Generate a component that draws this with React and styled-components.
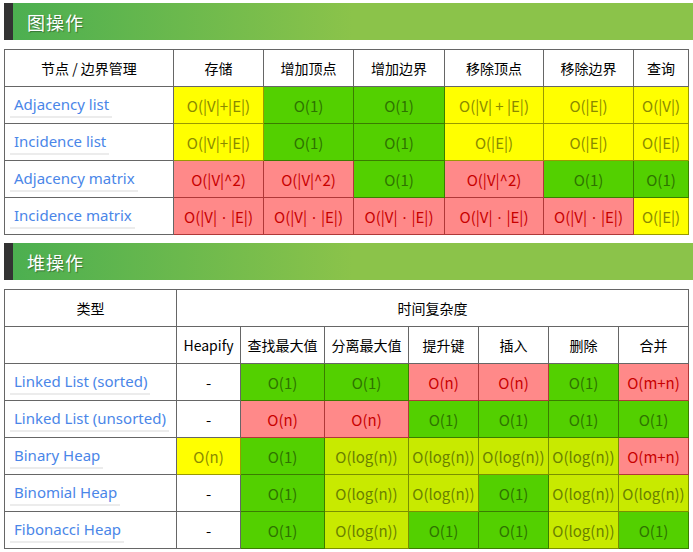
import React from 'react';
import styled, { createGlobalStyle } from 'styled-components';

const GlobalStyle = createGlobalStyle`
	html, body {
		margin: 0;
		padding: 0;
		background: #fff;
	}
	body {
		font-family: "Noto Sans", "Noto Sans CJK SC", sans-serif;
		color: #000;
	}
`;

const CELL = {
	g: { bg: '#53d000', fg: '#2e7300', line: '#3a7d00' },
	y: { bg: '#ffff00', fg: '#8a8a00', line: '#9a9a00' },
	r: { bg: '#ff8989', fg: '#c80000', line: '#b03838' },
	l: { bg: '#c8ea00', fg: '#6a8000', line: '#7a9000' },
	w: { bg: '#ffffff', fg: '#000000', line: '#666666' },
};

const Page = styled.div`
	display: flex;
	flex-direction: column;
	padding: 3px 0 0 4px;
`;

const Heading = styled.h2`
	margin: 0;
	height: 37px;
	display: flex;
	align-items: center;
	padding-left: 14px;
	border-left: 9px solid #333;
	background: linear-gradient(to right, #4caf50, #8bc34a 50%);
	color: #fff;
	font-size: 18px;
	font-weight: normal;
	letter-spacing: 1px;
	text-shadow: 1px 1px 1px rgba(0, 0, 0, 0.35);
	font-family: "Noto Sans CJK SC", sans-serif;
	& + table {
		margin-top: 9px;
	}
`;

const Table = styled.table`
	border-collapse: collapse;
	table-layout: fixed;
	width: 685px;
	margin-bottom: 8px;
	font-size: 14px;
`;

const Th = styled.th`
	height: 36px;
	padding: 0;
	border: 1px solid #666;
	font-weight: normal;
	font-size: 14px;
	text-align: center;
	font-family: "Noto Sans CJK SC", sans-serif;
`;

const Cell = styled.td`
	height: 36px;
	padding: 0;
	text-align: center;
	white-space: nowrap;
	font-size: 15px;
	font-family: "Noto Sans CJK SC", sans-serif;
	background: ${({ $k }) => CELL[$k].bg};
	color: ${({ $k }) => CELL[$k].fg};
	border: 1px solid ${({ $k }) => CELL[$k].line};
`;

const Dot = styled.span`
	font-family: "Noto Sans", sans-serif;
	margin: 0 5px;
`;

const NameCell = styled.td`
	height: 36px;
	padding: 0 0 0 5px;
	border: 1px solid #666;
	white-space: nowrap;
`;

const Link = styled.a`
	display: inline-block;
	margin-top: 3px;
	padding: 0 3px 2px 4px;
	color: #4a86e8;
	font-size: 15px;
	text-decoration: none;
	border-bottom: 2px solid #ececec;
	line-height: 19px;
`;

const graphCols = [169, 90, 90, 91, 99, 90, 55];
const heapCols = [172, 64, 84, 84, 70, 70, 70, 70];

const graphHead = ['节点 / 边界管理', '存储', '增加顶点', '增加边界', '移除顶点', '移除边界', '查询'];

const VE = 'VE';
const graphRows = [
	['Adjacency list', [['y', 'O(|V|+|E|)'], ['g', 'O(1)'], ['g', 'O(1)'], ['y', 'O(|V| + |E|)'], ['y', 'O(|E|)'], ['y', 'O(|V|)']]],
	['Incidence list', [['y', 'O(|V|+|E|)'], ['g', 'O(1)'], ['g', 'O(1)'], ['y', 'O(|E|)'], ['y', 'O(|E|)'], ['y', 'O(|E|)']]],
	['Adjacency matrix', [['r', 'O(|V|^2)'], ['r', 'O(|V|^2)'], ['g', 'O(1)'], ['r', 'O(|V|^2)'], ['g', 'O(1)'], ['g', 'O(1)']]],
	['Incidence matrix', [['r', VE], ['r', VE], ['r', VE], ['r', VE], ['r', VE], ['y', 'O(|E|)']]],
];

const heapHead = ['Heapify', '查找最大值', '分离最大值', '提升键', '插入', '删除', '合并'];

const LOG = 'O(log(n))';
const heapRows = [
	['Linked List (sorted)', [['w', '-'], ['g', 'O(1)'], ['g', 'O(1)'], ['r', 'O(n)'], ['r', 'O(n)'], ['g', 'O(1)'], ['r', 'O(m+n)']]],
	['Linked List (unsorted)', [['w', '-'], ['r', 'O(n)'], ['r', 'O(n)'], ['g', 'O(1)'], ['g', 'O(1)'], ['g', 'O(1)'], ['g', 'O(1)']]],
	['Binary Heap', [['y', 'O(n)'], ['g', 'O(1)'], ['l', LOG], ['l', LOG], ['l', LOG], ['l', LOG], ['r', 'O(m+n)']]],
	['Binomial Heap', [['w', '-'], ['g', 'O(1)'], ['l', LOG], ['l', LOG], ['g', 'O(1)'], ['l', LOG], ['l', LOG]]],
	['Fibonacci Heap', [['w', '-'], ['g', 'O(1)'], ['l', LOG], ['g', 'O(1)'], ['g', 'O(1)'], ['l', LOG], ['g', 'O(1)']]],
];

const Cols = ({ widths }) => (
	<colgroup>
		{widths.map((w, i) => <col key={i} style={{ width: w }} />)}
	</colgroup>
);

const Row = ({ name, cells }) => (
	<tr>
		<NameCell><Link href="#">{name}</Link></NameCell>
		{cells.map(([k, text], i) => (
			<Cell key={i} $k={k}>
				{text === VE ? <>O(|V|<Dot>·</Dot>|E|)</> : text}
			</Cell>
		))}
	</tr>
);

export default function App() {
	return (
		<Page>
			<GlobalStyle />
			<Heading>图操作</Heading>
			<Table>
				<Cols widths={graphCols} />
				<thead>
					<tr>{graphHead.map((h) => <Th key={h}>{h}</Th>)}</tr>
				</thead>
				<tbody>
					{graphRows.map(([name, cells]) => <Row key={name} name={name} cells={cells} />)}
				</tbody>
			</Table>
			<Heading>堆操作</Heading>
			<Table>
				<Cols widths={heapCols} />
				<thead>
					<tr>
						<Th>类型</Th>
						<Th colSpan={7}>时间复杂度</Th>
					</tr>
					<tr>
						<Th />
						{heapHead.map((h) => <Th key={h}>{h}</Th>)}
					</tr>
				</thead>
				<tbody>
					{heapRows.map(([name, cells]) => <Row key={name} name={name} cells={cells} />)}
				</tbody>
			</Table>
		</Page>
	);
}
